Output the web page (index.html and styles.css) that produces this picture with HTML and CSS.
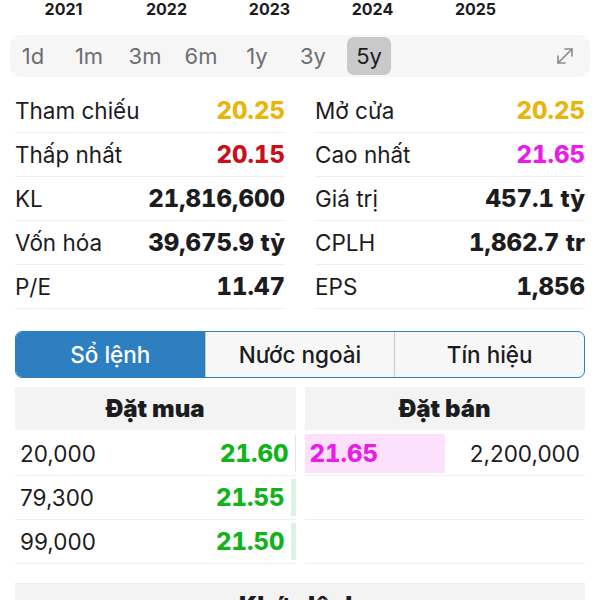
FILE: index.html
```html
<!doctype html>
<html>
<head>
	<meta charset="utf-8"/>
	<title>Chi tiết cổ phiếu</title>
	<link rel="stylesheet" href="styles.css">
</head>
<body>
	<div class="years">
		<span>2021</span>
		<span>2022</span>
		<span>2023</span>
		<span>2024</span>
		<span>2025</span>
	</div>

	<div class="periods">
		<span class="period">1d</span>
		<span class="period">1m</span>
		<span class="period">3m</span>
		<span class="period">6m</span>
		<span class="period">1y</span>
		<span class="period">3y</span>
		<span class="period active">5y</span>
		<span class="expand">
			<svg width="20" height="20" viewBox="0 0 20 20" fill="none" stroke="#8a8a8a" stroke-width="1.6" stroke-linecap="round" stroke-linejoin="round">
				<path d="M3 17 L17 3"/>
				<path d="M10 3 H17 V10"/>
				<path d="M3 10 V17 H10"/>
			</svg>
		</span>
	</div>

	<div class="stats">
		<div class="col">
			<div class="row"><span>Tham chiếu</span><b class="ref">20.25</b></div>
			<div class="row"><span>Thấp nhất</span><b class="down">20.15</b></div>
			<div class="row"><span>KL</span><b>21,816,600</b></div>
			<div class="row"><span>Vốn hóa</span><b>39,675.9 tỷ</b></div>
			<div class="row"><span>P/E</span><b>11.47</b></div>
		</div>
		<div class="col">
			<div class="row"><span>Mở cửa</span><b class="ref">20.25</b></div>
			<div class="row"><span>Cao nhất</span><b class="ceil">21.65</b></div>
			<div class="row"><span>Giá trị</span><b>457.1 tỷ</b></div>
			<div class="row"><span>CPLH</span><b>1,862.7 tr</b></div>
			<div class="row"><span>EPS</span><b>1,856</b></div>
		</div>
	</div>

	<div class="tabs">
		<div class="tab selected">Sổ lệnh</div>
		<div class="tab">Nước ngoài</div>
		<div class="tab">Tín hiệu</div>
	</div>

	<div class="book">
		<div class="side">
			<div class="book-head">Đặt mua</div>
			<div class="line">
				<span>20,000</span><b class="up">21.60</b><i class="vol" style="width: 1px"></i>
			</div>
			<div class="line">
				<span>79,300</span><b class="up">21.55</b><i class="vol" style="width: 5px"></i>
			</div>
			<div class="line">
				<span>99,000</span><b class="up">21.50</b><i class="vol" style="width: 5px"></i>
			</div>
		</div>
		<div class="side">
			<div class="book-head">Đặt bán</div>
			<div class="line sell">
				<i class="bar" style="width: 140px"></i><b class="ceil">21.65</b><span>2,200,000</span>
			</div>
			<div class="line"></div>
			<div class="line"></div>
		</div>
	</div>

	<div class="match">Khớp lệnh</div>
</body>
</html>
```

FILE: styles.css
```css
body {
	margin: 0;
	font-family: Inter, "Noto Sans", sans-serif;
	color: #1c1c1e;
	background: #fff;
	overflow: hidden;
}
.years {
	display: flex;
	padding-left: 12px;
	height: 18px;
	font-size: 16px;
	font-weight: 700;
	line-height: 18px;
}
.years span {
	width: 103px;
	text-align: center;
}
.periods {
	display: flex;
	align-items: center;
	gap: 12px;
	margin: 17px 10px 0;
	padding: 2px 1px;
	height: 42px;
	box-sizing: border-box;
	background: #f6f6f7;
	border-radius: 10px;
}
.period {
	width: 44px;
	height: 38px;
	line-height: 38px;
	text-align: center;
	font-size: 22px;
	color: #6d6d70;
	border-radius: 7px;
}
.period.active {
	background: #c9c9cb;
	color: #1c1c1e;
}
.expand {
	margin-left: auto;
	margin-right: 14px;
	display: flex;
}
.stats {
	display: flex;
	gap: 30px;
	padding: 0 15px;
	margin-top: 12px;
}
.col {
	flex: 1;
}
.row {
	display: flex;
	justify-content: space-between;
	align-items: center;
	height: 44px;
	border-bottom: 1px solid #efeff1;
	box-sizing: border-box;
	font-size: 22.5px;
}
.row b {
	font-size: 24px;
	font-weight: 800;
	font-variant-numeric: tabular-nums;
}
.ref { color: #e8b50c; }
.down { color: #c8101a; }
.ceil { color: #e81de8; }
.up { color: #12b21c; }
.tabs {
	display: flex;
	margin: 22px 15px 0;
	height: 45px;
	border: 1px solid #2e7fc0;
	border-radius: 7px;
	overflow: hidden;
	background: #f7f7f8;
}
.tab {
	flex: 1;
	display: flex;
	align-items: center;
	justify-content: center;
	font-size: 22.5px;
	font-weight: 500;
	border-left: 1px solid #c9c9cc;
}
.tab:first-child {
	border-left: none;
}
.tab.selected {
	background: #2e7fc0;
	color: #fff;
}
.book {
	display: flex;
	gap: 9px;
	padding: 0 15px;
	margin-top: 9px;
}
.side {
	flex: 1;
}
.book-head {
	height: 43px;
	line-height: 43px;
	text-align: center;
	background: #f3f3f4;
	font-size: 24px;
	font-weight: 900;
	margin-bottom: 2px;
}
.line {
	display: flex;
	align-items: center;
	height: 44px;
	border-bottom: 1px solid #f0f0f2;
	box-sizing: border-box;
	font-size: 22.5px;
	position: relative;
}
.line span {
	flex: 1;
}
.side:first-child .line {
	padding-left: 5px;
}
.side:first-child .line b {
	margin-right: 6px;
}
.line b {
	font-size: 24px;
	font-weight: 800;
	font-variant-numeric: tabular-nums;
	position: relative;
}
.vol {
	align-self: stretch;
	background: #dff2e4;
	margin: 3px 0;
}
.side:first-child .line:nth-child(2) .vol {
	background: #e4e4e6;
}
.sell {
	padding-right: 5px;
}
.sell span {
	text-align: right;
}
.bar {
	position: absolute;
	left: 0;
	top: 2px;
	bottom: 2px;
	background: #fde0fb;
}
.sell b {
	padding-left: 5px;
}
.match {
	margin: 19px 15px 0;
	height: 44px;
	line-height: 44px;
	text-align: center;
	background: #f3f3f4;
	font-size: 24px;
	font-weight: 900;
	border-top: 1px solid #ececee;
}
```
